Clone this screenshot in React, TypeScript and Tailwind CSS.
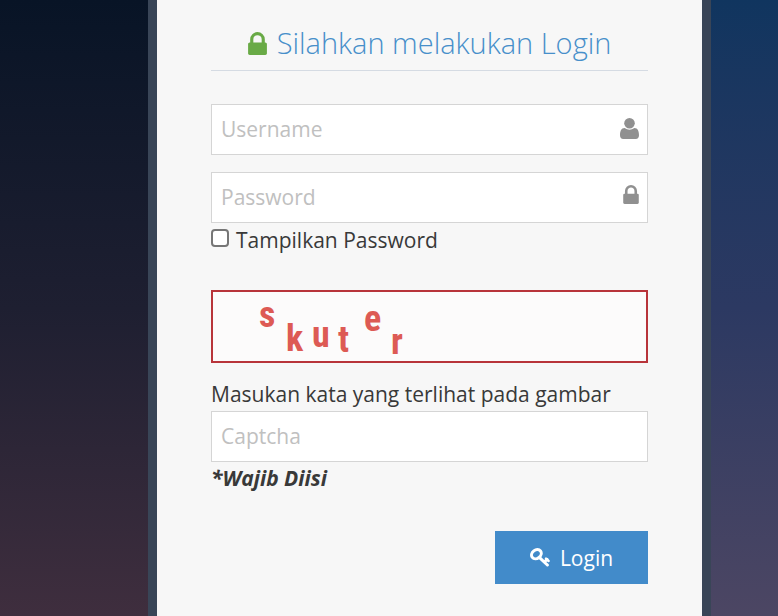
import { useState } from "react";

type IconProps = { className?: string };

function LockIcon({ className }: IconProps) {
  return (
    <svg className={className} viewBox="0 128 1152 1408" fill="currentColor" aria-hidden="true">
      <path d="M320 768h512v-192q0-106-75-181t-181-75-181 75-75 181v192zm832 96v576q0 40-28 68t-68 28h-960q-40 0-68-28t-28-68v-576q0-40 28-68t68-28h32v-192q0-184 132-316t316-132 316 132 132 316v192h32q40 0 68 28t28 68z" />
    </svg>
  );
}

function UserIcon({ className }: IconProps) {
  return (
    <svg className={className} viewBox="0 0 19 21" fill="currentColor" aria-hidden="true">
      <circle cx="9.5" cy="5.3" r="5.3" />
      <path d="M4.6 9.9Q9.5 13.4 14.4 9.9C17.8 9.9 19 13 19 17.3C19 19.6 17.8 21 15.8 21H3.2C1.2 21 0 19.6 0 17.3C0 13 1.2 9.9 4.6 9.9Z" />
    </svg>
  );
}

function KeyIcon({ className }: IconProps) {
  return (
    <svg
      className={className}
      viewBox="0 0 20 19"
      fill="none"
      stroke="currentColor"
      strokeWidth="3"
      strokeLinecap="round"
      aria-hidden="true"
    >
      <ellipse cx="6.4" cy="6.2" rx="5.2" ry="4.2" transform="rotate(-38 6.4 6.2)" />
      <path d="M9.8 9.8L17.4 17M14.4 14L17 11.4" />
      <path strokeWidth="2.4" d="M16 10.6L18.6 13" />
    </svg>
  );
}

const captcha = [
  { char: "s", x: 46, y: 35 },
  { char: "k", x: 73, y: 59 },
  { char: "u", x: 99, y: 55 },
  { char: "t", x: 125, y: 60 },
  { char: "e", x: 151, y: 39 },
  { char: "r", x: 178, y: 62 },
];

function CaptchaImage() {
  return (
    <div className="mt-[34px] h-[73px] border-2 border-[#b8343a] bg-[#fcfbfb]">
      <svg className="h-full w-full overflow-visible" role="img" aria-label="Captcha">
        {captcha.map((item) => (
          <text
            key={item.char}
            x={item.x}
            y={item.y}
            className="fill-[#dd5a54] font-['Roboto_Condensed','Liberation_Sans_Narrow','Roboto',sans-serif] text-[36px] font-bold"
          >
            {item.char}
          </text>
        ))}
      </svg>
    </div>
  );
}

const inputStyle =
  "block h-[51px] w-full border border-[#d5d5d5] bg-white pb-[2px] pl-[9px] pr-10 text-[21px] text-[#555] outline-none placeholder:text-[#c0c0c0]";

function App() {
  const [showPassword, setShowPassword] = useState(false);

  return (
    <div className="grid min-h-screen grid-cols-[148fr_563fr_67fr] bg-[#1d1f33] font-['Open_Sans',sans-serif] text-[21px] leading-8 text-[#393939]">
      <div className="bg-linear-to-b from-[#081426] via-[#1e1f31] to-[#3f2e3e]" />
      <main className="border-x-9 border-[#394557] bg-[#f7f7f7] px-[54px] pb-8 pt-5">
        <h4 className="flex h-[51px] items-center justify-center gap-[10px] border-b border-[#d5dbe3] pb-1 text-[29px] font-light text-[#478fca]">
          <LockIcon className="h-[23px] w-[19px] text-[#69aa46]" />
          Silahkan melakukan Login
        </h4>
        <form className="mt-[33px]" onSubmit={(e) => e.preventDefault()}>
          <div className="relative">
            <input type="text" aria-label="Username" placeholder="Username" className={inputStyle} />
            <UserIcon className="absolute right-[9px] top-[14px] h-[21px] w-[19px] text-[#909090]" />
          </div>
          <div className="relative mt-[17px]">
            <input
              type={showPassword ? "text" : "password"}
              aria-label="Password"
              placeholder="Password"
              className={inputStyle}
            />
            <LockIcon className="absolute right-[9px] top-[13px] h-[19px] w-4 text-[#909090]" />
          </div>
          <label className="flex items-center gap-[7px] pt-[1px]">
            <input
              type="checkbox"
              className="mb-1 size-[18px] appearance-none rounded-[4px] border-2 border-[#767676] bg-white checked:bg-[#478fca]"
              checked={showPassword}
              onChange={(e) => setShowPassword(e.target.checked)}
            />
            Tampilkan Password
          </label>
          <CaptchaImage />
          <label htmlFor="captcha" className="mb-px mt-[15px] block">
            Masukan kata yang terlihat pada gambar
          </label>
          <input id="captcha" type="text" placeholder="Captcha" className={inputStyle} />
          <p className="font-bold italic">*Wajib Diisi</p>
          <button
            type="submit"
            className="ml-auto mt-[37px] flex h-[53px] w-[153px] items-center justify-center gap-[10px] bg-[#428bca] text-white"
          >
            <KeyIcon className="h-[19px] w-5" />
            Login
          </button>
        </form>
      </main>
      <div className="bg-linear-to-b from-[#10355f] via-[#2c3962] to-[#4c4663]" />
    </div>
  );
}

export default App;
